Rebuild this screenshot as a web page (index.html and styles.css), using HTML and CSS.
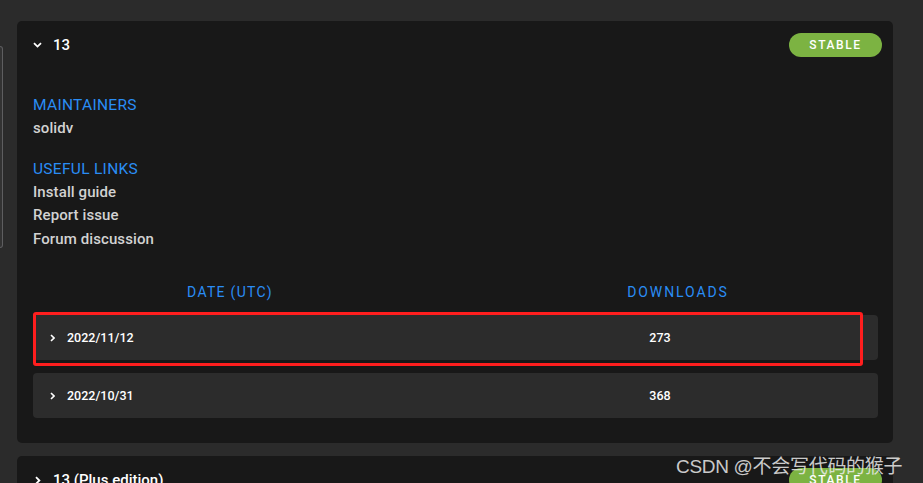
FILE: index.html
```html
<!DOCTYPE html>
<html>
<head>
<meta charset="utf-8">
<link rel="stylesheet" href="styles.css">
</head>
<body>
<div class="page">
  <div class="sliver"></div>
  <main class="list">
    <section class="card">
      <header class="card-head">
        <div class="title">
          <svg class="chev-down" width="9" height="6" viewBox="0 0 9 6"><path d="M1 1.2 L4.5 4.6 L8 1.2" fill="none" stroke="#fff" stroke-width="1.8"/></svg>
          <span class="version">13</span>
        </div>
        <span class="badge">STABLE</span>
      </header>
      <div class="info">
        <h3 class="label first">MAINTAINERS</h3>
        <p class="item">solidv</p>
        <h3 class="label">USEFUL LINKS</h3>
        <p class="item">Install guide</p>
        <p class="item">Report issue</p>
        <p class="item">Forum discussion</p>
      </div>
      <div class="table">
        <div class="thead">
          <span class="th th-date">DATE (UTC)</span>
          <span class="th th-dl">DOWNLOADS</span>
        </div>
        <div class="rows">
          <div class="row">
            <div class="cell-date">
              <svg class="chev-right" width="5" height="8" viewBox="0 0 5 8"><path d="M1 1 L4 4 L1 7" fill="none" stroke="#fff" stroke-width="1.6"/></svg>
              <span>2022/11/12</span>
            </div>
            <div class="cell-num">273</div>
          </div>
          <div class="row">
            <div class="cell-date">
              <svg class="chev-right" width="5" height="8" viewBox="0 0 5 8"><path d="M1 1 L4 4 L1 7" fill="none" stroke="#fff" stroke-width="1.6"/></svg>
              <span>2022/10/31</span>
            </div>
            <div class="cell-num">368</div>
          </div>
          <div class="highlight"></div>
        </div>
      </div>
    </section>
    <section class="card">
      <header class="card-head">
        <div class="title">
          <svg class="chev-right head" width="9" height="9" viewBox="0 0 9 9"><path d="M3 1.2 L6.4 4.5 L3 7.8" fill="none" stroke="#fff" stroke-width="1.8"/></svg>
          <span class="version">13 (Plus edition)</span>
        </div>
        <span class="badge">STABLE</span>
      </header>
    </section>
  </main>
</div>
<div class="watermark">CSDN @不会写代码的猴子</div>
</body>
</html>
```

FILE: styles.css
```css
html, body {
  margin: 0;
  padding: 0;
  background: #2b2b2b;
  height: 483px;
  overflow: hidden;
  font-family: Roboto, "Noto Sans", sans-serif;
}

.page {
  display: flex;
  align-items: flex-start;
  padding-top: 21px;
}

.sliver {
  flex: none;
  width: 2px;
  height: 200px;
  margin-top: 25px;
  background: #333;
  border: 1px solid #5e5e60;
  border-left: none;
  border-radius: 0 4px 4px 0;
}

.list {
  margin-left: 14px;
  width: 876px;
  display: flex;
  flex-direction: column;
  gap: 13px;
}

.card {
  background: #181818;
  border-radius: 5px;
  padding: 12px 15px 25px 16px;
}

.card-head {
  display: flex;
  align-items: center;
  justify-content: space-between;
  height: 24px;
  margin-right: -4px;
}

.title {
  display: flex;
  align-items: center;
}

.chev-down {
  margin-right: 11px;
}

.chev-right.head {
  margin-right: 11px;
}

.version {
  color: #fff;
  font-size: 15px;
  font-weight: 500;
}

.badge {
  width: 93px;
  height: 24px;
  border-radius: 12px;
  background: #7cb342;
  color: #fff;
  font-size: 12px;
  font-weight: 500;
  letter-spacing: 1.6px;
  display: flex;
  align-items: center;
  justify-content: center;
}

.info {
  margin-top: 38px;
}

.label {
  margin: 18px 0 2px;
  font-size: 15.5px;
  font-weight: 400;
  line-height: 20px;
  color: #2a8df5;
  letter-spacing: 0.3px;
}

.label.first {
  margin-top: 0;
}

.item {
  margin: 0;
  font-size: 15px;
  font-weight: 500;
  line-height: 23.5px;
  color: #d2d2d2;
  letter-spacing: 0.1px;
}

.table {
  margin-top: 31px;
}

.thead {
  display: grid;
  grid-template-columns: 394px 1fr;
  line-height: 20px;
}

.th {
  color: #2a8df5;
  font-size: 14px;
  letter-spacing: 1.3px;
  text-align: center;
}

.th-dl {
  padding-left: 51px;
  letter-spacing: 1.9px;
}

.rows {
  position: relative;
  margin-top: 13px;
  display: flex;
  flex-direction: column;
  gap: 13px;
}

.row {
  height: 45px;
  background: #2c2c2c;
  border-radius: 4px;
  display: grid;
  grid-template-columns: 422px 1fr;
  align-items: center;
  color: #fff;
  font-size: 12.5px;
  font-weight: 500;
}

.cell-date {
  display: flex;
  align-items: center;
  padding-left: 17px;
}

.chev-right {
  margin-right: 12px;
}

.cell-num {
  text-align: center;
  padding-right: 13px;
}

.highlight {
  position: absolute;
  left: 0;
  top: -3px;
  width: 824px;
  height: 48px;
  border: 3px solid #ff1e1e;
  border-radius: 3px;
}

.watermark {
  position: absolute;
  left: 676px;
  top: 451px;
  font-family: "Liberation Sans", "Noto Sans CJK SC", sans-serif;
  font-size: 19px;
  letter-spacing: -0.3px;
  color: rgba(235, 235, 235, 0.85);
  white-space: nowrap;
}
```
